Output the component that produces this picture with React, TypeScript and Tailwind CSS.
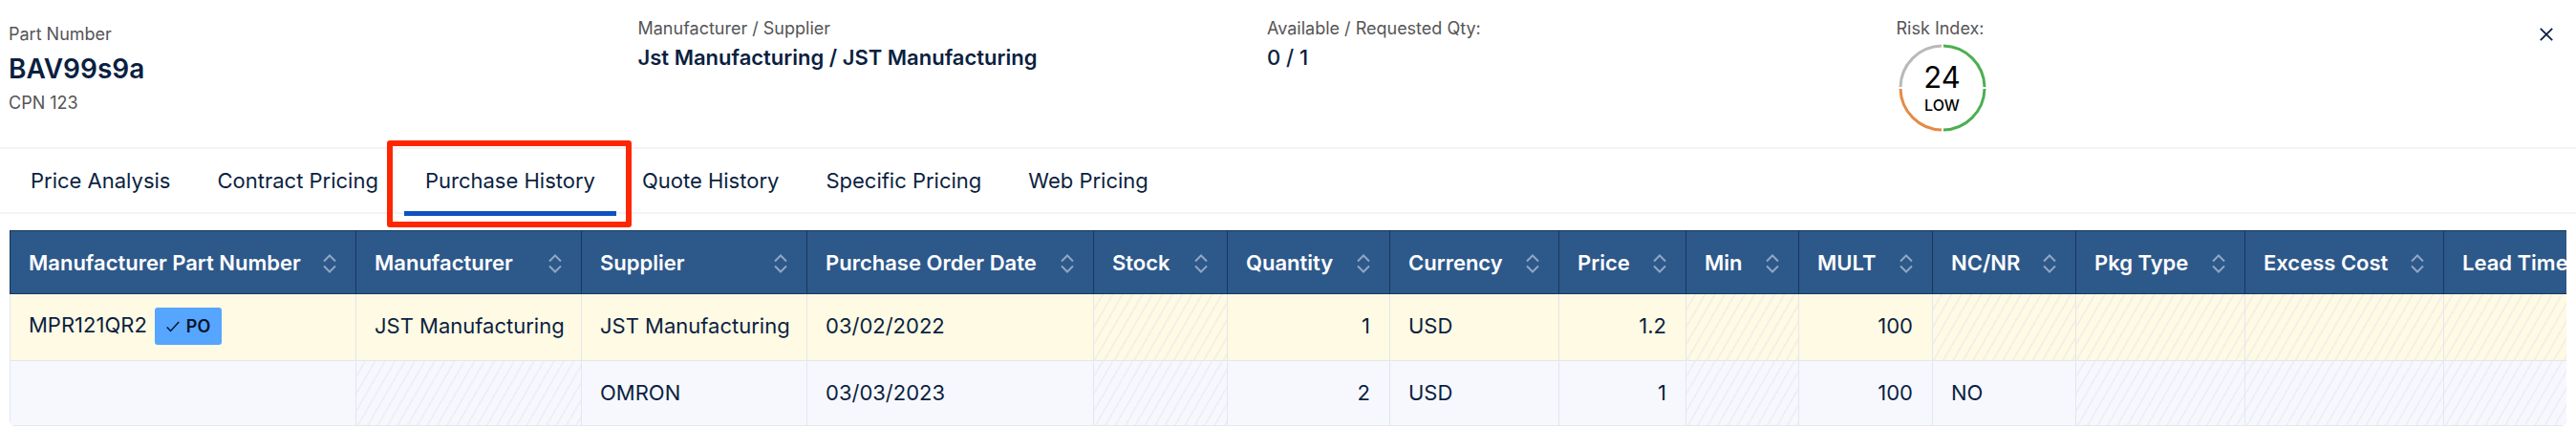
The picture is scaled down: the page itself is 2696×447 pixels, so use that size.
import { useState } from 'react'

type Align = 'left' | 'right'

interface Column {
  key: string
  label: string
  width: string
  align?: Align
}

interface Row {
  id: number
  highlighted?: boolean
  cells: Record<string, string>
}

const TABS = ['Price Analysis', 'Contract Pricing', 'Purchase History', 'Quote History', 'Specific Pricing', 'Web Pricing']

const COLUMNS: Column[] = [
  { key: 'mpn', label: 'Manufacturer Part Number', width: 'w-[363px]' },
  { key: 'manufacturer', label: 'Manufacturer', width: 'w-[236px]' },
  { key: 'supplier', label: 'Supplier', width: 'w-[236px]' },
  { key: 'date', label: 'Purchase Order Date', width: 'w-[300px]' },
  { key: 'stock', label: 'Stock', width: 'w-[140px]' },
  { key: 'quantity', label: 'Quantity', width: 'w-[170px]', align: 'right' },
  { key: 'currency', label: 'Currency', width: 'w-[177px]' },
  { key: 'price', label: 'Price', width: 'w-[133px]', align: 'right' },
  { key: 'min', label: 'Min', width: 'w-[118px]' },
  { key: 'mult', label: 'MULT', width: 'w-[140px]', align: 'right' },
  { key: 'ncnr', label: 'NC/NR', width: 'w-[150px]' },
  { key: 'pkg', label: 'Pkg Type', width: 'w-[177px]' },
  { key: 'excess', label: 'Excess Cost', width: 'w-[208px]' },
  { key: 'lead', label: 'Lead Time', width: 'w-[200px]' },
]

const ROWS: Row[] = [
  {
    id: 1,
    highlighted: true,
    cells: {
      mpn: 'MPR121QR2',
      manufacturer: 'JST Manufacturing',
      supplier: 'JST Manufacturing',
      date: '03/02/2022',
      quantity: '1',
      currency: 'USD',
      price: '1.2',
      mult: '100',
    },
  },
  {
    id: 2,
    cells: { mpn: '', supplier: 'OMRON', date: '03/03/2023', quantity: '2', currency: 'USD', price: '1', mult: '100', ncnr: 'NO' },
  },
]

function SortIcon() {
  return (
    <svg width="14" height="20" viewBox="0 0 14 20" fill="none" stroke="#8fa7c3" strokeWidth="2" aria-hidden="true">
      <path d="M1 7.5 7 1.5l6 6M1 12.5l6 6 6-6" />
    </svg>
  )
}

function RiskGauge({ score, level }: { score: number; level: string }) {
  return (
    <div className="relative flex size-[92px] flex-col items-center justify-center pt-0.5 text-black">
      <svg className="absolute inset-0" viewBox="0 0 92 92" fill="none" strokeWidth="3" aria-hidden="true">
        <path d="M47 2A44 44 0 0 1 90 45" stroke="#4caf50" />
        <path d="M90 47A44 44 0 0 1 47 90" stroke="#4caf50" />
        <path d="M45 90A44 44 0 0 1 2 47" stroke="#e58a46" />
        <path d="M2 45A44 44 0 0 1 45 2" stroke="#b9b9b9" />
      </svg>
      <span className="text-[31px] leading-[34px]">{score}</span>
      <span className="text-base leading-6 font-medium">{level}</span>
    </div>
  )
}

function PartHeader() {
  return (
    <header className="flex items-start bg-white pl-[9px]">
      <div className="grid h-[154px] flex-1 grid-cols-4">
        <div className="pt-6">
          <p className="text-lg leading-6 text-[#555]">Part Number</p>
          <h1 className="py-1 text-[28px] leading-10 font-semibold">BAV99s9a</h1>
          <p className="text-lg leading-6 text-[#555]">CPN 123</p>
        </div>
        <div className="pt-[18px]">
          <p className="text-lg leading-6 text-[#555]">Manufacturer / Supplier</p>
          <p className="pt-0.5 text-[22px] leading-8 font-semibold">Jst Manufacturing / JST Manufacturing</p>
        </div>
        <div className="pt-[18px]">
          <p className="text-lg leading-6 text-[#555]">Available / Requested Qty:</p>
          <p className="pt-0.5 text-[22px] leading-8 font-medium">0 / 1</p>
        </div>
        <div className="pt-[18px]">
          <p className="text-lg leading-6 text-[#555]">Risk Index:</p>
          <div className="pt-1 pl-0.5">
            <RiskGauge score={24} level="LOW" />
          </div>
        </div>
      </div>
      <button type="button" aria-label="Close" className="mt-4 mr-[11px] ml-0.5 flex size-10 items-center justify-center">
        <svg width="14" height="14" viewBox="0 0 14 14" stroke="#0b1f41" strokeWidth="1.8" aria-hidden="true">
          <path d="M.8.8l12.4 12.4M13.2.8.8 13.2" />
        </svg>
      </button>
    </header>
  )
}

function PoBadge() {
  return (
    <span className="ml-2 inline-flex h-[39px] items-center gap-[7px] rounded-[3px] bg-[#56a5ff] px-3 text-lg font-semibold text-[#06142c]">
      <svg width="14" height="12" viewBox="0 0 14 12" fill="none" stroke="currentColor" strokeWidth="1.5" aria-hidden="true">
        <path d="M.8 6.5 4.6 10.5 13.2 1" />
      </svg>
      PO
    </span>
  )
}

function HistoryTable() {
  return (
    <div className="mx-[10px] overflow-hidden rounded-b-md">
      <table className="w-[2748px] table-fixed border-separate border-spacing-0">
        <colgroup>
          {COLUMNS.map((col) => (
            <col key={col.key} className={col.width} />
          ))}
        </colgroup>
        <thead>
          <tr className="h-[67px] bg-[#2d588a] text-white">
            {COLUMNS.map((col) => (
              <th
                key={col.key}
                scope="col"
                className="border-y border-r border-[#17375e] pt-0.5 pr-5 pl-[19px] text-left font-semibold first:border-l"
              >
                <button type="button" className="flex w-full items-center justify-between whitespace-nowrap">
                  {col.label}
                  <SortIcon />
                </button>
              </th>
            ))}
          </tr>
        </thead>
        <tbody>
          {ROWS.map((row) => (
            <tr key={row.id} className={row.highlighted ? 'h-[70px] bg-[#fefae3]' : 'h-[68px] bg-[#f7f8fd]'}>
              {COLUMNS.map((col) => {
                const value = row.cells[col.key]
                const empty = value === undefined
                return (
                  <td
                    key={col.key}
                    className={`border-r border-b border-[#e4e6f0] pr-5 pl-[19px] whitespace-nowrap first:border-l ${
                      row.highlighted ? 'pb-0.5' : ''
                    } ${col.align === 'right' ? 'text-right' : 'text-left'} ${
                      empty ? 'bg-[repeating-linear-gradient(120deg,transparent_0_7px,#dfdcec55_7px_9px)]' : ''
                    }`}
                  >
                    {value}
                    {col.key === 'mpn' && row.highlighted && <PoBadge />}
                  </td>
                )
              })}
            </tr>
          ))}
        </tbody>
      </table>
    </div>
  )
}

export default function App() {
  const [active, setActive] = useState('Purchase History')

  return (
    <main className="bg-white pb-px font-[Inter,'Liberation_Sans',sans-serif] text-[22px] text-[#0b1f41]">
      <PartHeader />
      <nav role="tablist" className="flex h-[70px] gap-[5px] border-y-2 border-[#f3f3f4] pl-[10px]">
        {TABS.map((tab) => (
          <button
            key={tab}
            type="button"
            role="tab"
            aria-selected={tab === active}
            onClick={() => setActive(tab)}
            className="relative px-[22px]"
          >
            {tab}
            {tab === active && (
              <>
                <span className="absolute inset-x-0 -bottom-1 h-[5px] bg-[#0f52c0]" />
                <span className="absolute -top-[9px] -right-4 -bottom-4 -left-[18px] rounded-[3px] border-[6px] border-[#ff2600]" />
              </>
            )}
          </button>
        ))}
      </nav>
      <section className="pt-[17px]">
        <HistoryTable />
      </section>
    </main>
  )
}
